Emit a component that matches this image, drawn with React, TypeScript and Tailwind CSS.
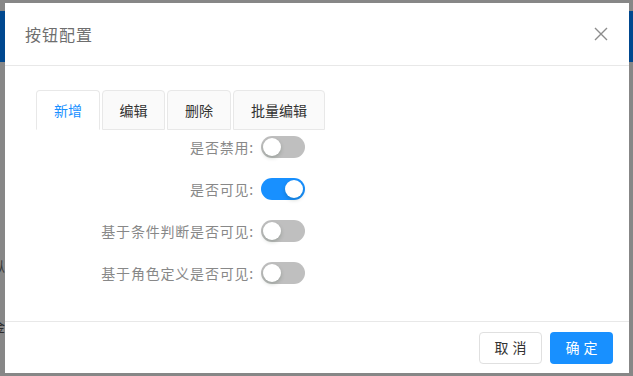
const font = { fontFamily: '"Noto Sans CJK SC", "Noto Sans", sans-serif' };

function Switch({ on }: { on?: boolean }) {
  return (
    <div
      className={`relative w-[44px] h-[22px] rounded-full shrink-0 ${
        on ? "bg-[#1890ff]" : "bg-[#bfbfbf]"
      }`}
    >
      <div
        className={`absolute top-[2px] w-[18px] h-[18px] rounded-full bg-white shadow-[0_2px_4px_rgba(0,35,11,0.2)] ${
          on ? "left-[24px]" : "left-[2px]"
        }`}
      />
    </div>
  );
}

const rows = [
  { label: "是否禁用:", on: false },
  { label: "是否可见:", on: true },
  { label: "基于条件判断是否可见:", on: false },
  { label: "基于角色定义是否可见:", on: false },
];

const tabs = [
  { name: "新增", w: "w-[64px]" },
  { name: "编辑", w: "w-[63px]" },
  { name: "删除", w: "w-[64px]" },
  { name: "批量编辑", w: "w-[92px]" },
];

export default function App() {
  return (
    <div className="relative w-[633px] h-[376px] overflow-hidden bg-[#878787]" style={font}>
      {/* page behind the mask */}
      <div className="absolute left-0 right-0 top-[11px] h-[51px] bg-[#00488f]" />
      <span className="absolute left-[-9px] top-[256px] text-[14px] text-[#3a3a3a]">纵</span>
      <span className="absolute left-[-9px] top-[316px] text-[14px] text-[#2a2a2a]">金</span>

      {/* modal */}
      <div className="absolute left-[5px] top-[3px] w-[624px] h-[370px] bg-white flex flex-col">
        <div className="h-[63px] border-b border-[#e8e8e8] flex items-center justify-between pl-[20px] pr-[20px] shrink-0">
          <span className="text-[16px] text-[#6e6e6e] tracking-[1px]">按钮配置</span>
          <svg width="14" height="14" viewBox="0 0 14 14" className="mr-[1px]">
            <path d="M1 1L13 13M13 1L1 13" stroke="#8c8c8c" strokeWidth="1.4" />
          </svg>
        </div>

        <div className="flex-1 pt-[24px] pl-[31px]">
          <div className="flex gap-[2px] h-[40px]">
            {tabs.map((t, i) => (
              <div
                key={t.name}
                className={`${t.w} flex items-center justify-center text-[14px] border border-[#e8e8e8] rounded-t-[4px] ${
                  i === 0 ? "bg-white text-[#1890ff] border-b-white" : "bg-[#fafafa] text-[#333]"
                }`}
              >
                {t.name}
              </div>
            ))}
          </div>
          <div className="flex flex-col gap-[20px] mt-[6px] ml-[-31px]">
            {rows.map((r) => (
              <div key={r.label} className="flex items-center h-[22px]">
                <div className="w-[249px] text-right text-[14px] text-[#888] tracking-[0.8px]">{r.label}</div>
                <div className="ml-[7px]">
                  <Switch on={r.on} />
                </div>
              </div>
            ))}
          </div>
        </div>

        <div className="h-[52px] border-t border-[#e8e8e8] flex items-center justify-end gap-[8px] pr-[16px] shrink-0">
          <button className="w-[63px] h-[32px] rounded-[4px] border border-[#e0e0e0] bg-white text-[14px] text-[#333] tracking-[4px] pl-[4px]">
            取消
          </button>
          <button className="w-[63px] h-[32px] rounded-[4px] bg-[#1890ff] text-[14px] text-white tracking-[4px] pl-[4px]">
            确定
          </button>
        </div>
      </div>
    </div>
  );
}
